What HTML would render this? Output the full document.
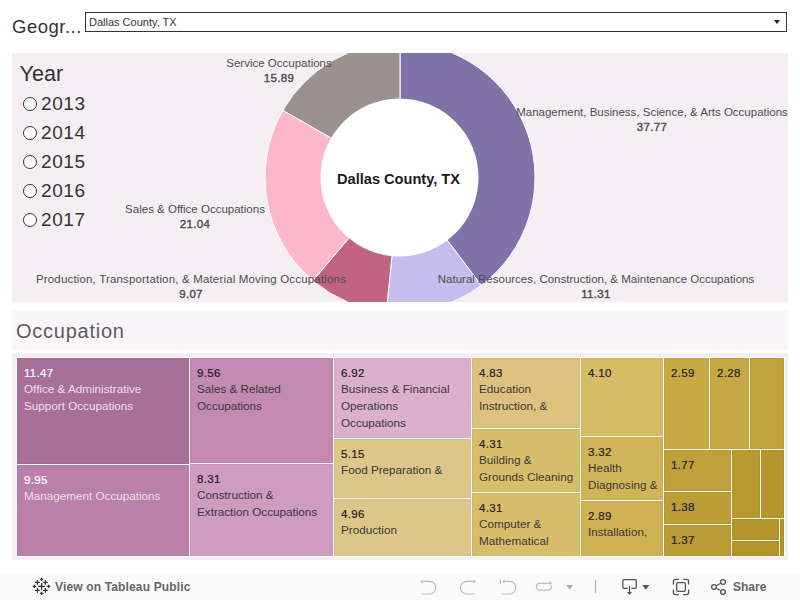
<!DOCTYPE html>
<html><head><meta charset="utf-8">
<style>
*{margin:0;padding:0;box-sizing:border-box}
html,body{width:800px;height:600px;overflow:hidden;background:#fff;font-family:"Liberation Sans",sans-serif;position:relative}
.a{position:absolute;white-space:nowrap}
#geo{left:12px;top:14.5px;font-size:18.5px;color:#333;line-height:24px;letter-spacing:0.5px}
#dd{left:85px;top:12px;width:702px;height:20px;border:1px solid #333;background:#fff}
#ddt{left:89px;top:16px;font-size:11px;line-height:13px;color:#333}
#ddarr{left:773.5px;top:20px;width:0;height:0;border-left:3.5px solid transparent;border-right:3.5px solid transparent;border-top:4.5px solid #222}
#top{left:12px;top:53px;width:776px;height:249px;background:#F5EFF4;overflow:hidden}
#year{left:19.5px;top:61.5px;font-size:21.6px;line-height:24px;color:#333}
.rb{position:absolute;left:23px;width:14px;height:14px;border:1px solid #333;border-radius:50%;background:#fff}
.yr{position:absolute;left:41px;font-size:19px;line-height:22px;color:#333;letter-spacing:0.6px}
.lbl{position:absolute;font-size:11.5px;line-height:15px;color:#4d4d4d;text-align:center;white-space:nowrap}
.lbl b{font-weight:normal;-webkit-text-stroke:0.4px #4d4d4d;color:#4d4d4d;letter-spacing:0.3px}
#occ{left:12px;top:310px;width:776px;height:40px;background:#FAF5F9}
#occt{left:16px;top:318px;font-size:20px;line-height:26px;color:#5c5c5c;letter-spacing:0.75px}
#tm{left:12px;top:353px;width:776px;height:207px;background:#F5EFF4}
#tmw{left:16px;top:357px;width:769px;height:200px;background:#fff}
.c{position:absolute;overflow:hidden;box-shadow:inset 0 0 0 1px rgba(0,0,0,0.04)}
.c .n{position:absolute;left:7px;top:8.8px;font-size:11.5px;font-weight:normal;-webkit-text-stroke:0.2px #222;line-height:13px;color:#222;letter-spacing:0.3px}
.c.w .n{-webkit-text-stroke:0.2px #fff}
.c .t{position:absolute;left:7px;top:22px;font-size:11.7px;line-height:17px;color:#3a3a3a;white-space:nowrap}
.c.w .n{color:#fff}
.c.w .t{color:#EDDFE8}
#tb{left:0;top:573px;width:800px;height:27px;background:#FAFAFA}
#vt{left:55px;top:580px;font-size:12px;font-weight:bold;line-height:14px;color:#666;letter-spacing:0.15px}
#sh{left:733px;top:580px;font-size:12px;font-weight:bold;line-height:14px;color:#666}
</style></head><body>
<div class="a" id="geo">Geogr...</div>
<div class="a" id="dd"></div>
<div class="a" id="ddt">Dallas County, TX</div>
<div class="a" id="ddarr"></div>

<div class="a" id="top">
<svg width="776" height="249" style="position:absolute;left:0;top:0">
<g transform="translate(-12,-53)" stroke="#fff" stroke-width="1">
<path d="M400 177.5 L400.00 42.50 A135 135 0 0 1 481.23 285.33 Z" fill="#7F72A8"/>
<path d="M400 177.5 L481.23 285.33 A135 135 0 0 1 386.29 311.80 Z" fill="#C5BDEB"/>
<path d="M400 177.5 L386.29 311.80 A135 135 0 0 1 312.91 280.65 Z" fill="#C26384"/>
<path d="M400 177.5 L312.91 280.65 A135 135 0 0 1 282.89 110.34 Z" fill="#FDB7CC"/>
<path d="M400 177.5 L282.89 110.34 A135 135 0 0 1 400.00 42.50 Z" fill="#9B918E"/>
<circle cx="399.5" cy="177.5" r="79" fill="#fff" stroke="none"/>
</g>
</svg>
</div>
<div class="a" id="year">Year</div>
<div class="rb" style="top:97px"></div><div class="yr" style="top:93px">2013</div>
<div class="rb" style="top:126px"></div><div class="yr" style="top:122px">2014</div>
<div class="rb" style="top:155px"></div><div class="yr" style="top:151px">2015</div>
<div class="rb" style="top:184px"></div><div class="yr" style="top:180px">2016</div>
<div class="rb" style="top:213px"></div><div class="yr" style="top:209px">2017</div>

<div class="lbl" style="left:179px;top:56px;width:200px">Service Occupations<br><b>15.89</b></div>
<div class="lbl" style="left:502px;top:105px;width:300px">Management, Business, Science, &amp; Arts Occupations<br><b>37.77</b></div>
<div class="lbl" style="left:95px;top:202px;width:200px">Sales &amp; Office Occupations<br><b>21.04</b></div>
<div class="lbl" style="left:16px;top:272px;width:350px;letter-spacing:0.17px">Production, Transportation, &amp; Material Moving Occupations<br><b>9.07</b></div>
<div class="lbl" style="left:421px;top:272px;width:350px">Natural Resources, Construction, &amp; Maintenance Occupations<br><b>11.31</b></div>
<div class="a" style="left:299px;top:171px;width:199px;text-align:center;font-size:14.6px;font-weight:bold;color:#1a1a1a;line-height:17px">Dallas County, TX</div>

<div class="a" id="occ"></div>
<div class="a" id="occt">Occupation</div>

<div class="a" id="tm"></div>
<div class="a" id="tmw"></div>
<!--cells-->
<div class="c w" style="left:17px;top:358px;width:172px;height:106px;background:#A86F98"><div class="n">11.47</div><div class="t">Office &amp; Administrative<br>Support Occupations</div></div>
<div class="c w" style="left:17px;top:465px;width:172px;height:91px;background:#BA80A9"><div class="n">9.95</div><div class="t">Management Occupations</div></div>
<div class="c" style="left:190px;top:358px;width:143px;height:105px;background:#C389B1"><div class="n">9.56</div><div class="t">Sales &amp; Related<br>Occupations</div></div>
<div class="c" style="left:190px;top:464px;width:143px;height:92px;background:#CF9BC0"><div class="n">8.31</div><div class="t">Construction &amp;<br>Extraction Occupations</div></div>
<div class="c" style="left:334px;top:358px;width:137px;height:80px;background:#DBB0CB"><div class="n">6.92</div><div class="t">Business &amp; Financial<br>Operations<br>Occupations</div></div>
<div class="c" style="left:334px;top:439px;width:137px;height:59px;background:#DEC68A"><div class="n">5.15</div><div class="t">Food Preparation &amp;</div></div>
<div class="c" style="left:334px;top:499px;width:137px;height:57px;background:#DEC68A"><div class="n">4.96</div><div class="t">Production</div></div>
<div class="c" style="left:472px;top:358px;width:108px;height:70px;background:#DCC27E"><div class="n">4.83</div><div class="t">Education<br>Instruction, &amp;</div></div>
<div class="c" style="left:472px;top:429px;width:108px;height:63px;background:#D7BE6A"><div class="n">4.31</div><div class="t">Building &amp;<br>Grounds Cleaning</div></div>
<div class="c" style="left:472px;top:493px;width:108px;height:63px;background:#D7BD6A"><div class="n">4.31</div><div class="t">Computer &amp;<br>Mathematical</div></div>
<div class="c" style="left:581px;top:358px;width:82px;height:78px;background:#D6BC66"><div class="n">4.10</div></div>
<div class="c" style="left:581px;top:437px;width:82px;height:63px;background:#D0B558"><div class="n">3.32</div><div class="t">Health<br>Diagnosing &amp;</div></div>
<div class="c" style="left:581px;top:501px;width:82px;height:55px;background:#CDB152"><div class="n">2.89</div><div class="t">Installation,</div></div>
<div class="c" style="left:664px;top:358px;width:45px;height:91px;background:#C8AA45"><div class="n">2.59</div></div>
<div class="c" style="left:710px;top:358px;width:39px;height:91px;background:#C5A841"><div class="n">2.28</div></div>
<div class="c" style="left:750px;top:358px;width:34px;height:91px;background:#C2A43C"></div>
<div class="c" style="left:664px;top:450px;width:67px;height:41px;background:#BFA03A"><div class="n">1.77</div></div>
<div class="c" style="left:664px;top:492px;width:67px;height:32px;background:#BC9D36"><div class="n">1.38</div></div>
<div class="c" style="left:664px;top:525px;width:67px;height:31px;background:#BA9B34"><div class="n">1.37</div></div>
<div class="c" style="left:732px;top:450px;width:28px;height:68px;background:#B8992F"></div>
<div class="c" style="left:761px;top:450px;width:23px;height:68px;background:#B6972D"></div>
<div class="c" style="left:732px;top:519px;width:47px;height:21px;background:#B4962B"></div>
<div class="c" style="left:732px;top:541px;width:47px;height:15px;background:#B39529"></div>
<div class="c" style="left:780px;top:519px;width:4px;height:37px;background:#B29428"></div>
<!--/cells-->

<div class="a" id="tb"></div>
<svg class="a" style="left:0;top:573px" width="800" height="27"><g transform="translate(0,-573)" fill="none" stroke-linecap="butt">
<g transform="translate(30,575)" stroke="#333">
<path d="M8.2 11.4H14.9M11.6 8.1V14.7" stroke-width="1.3"/>
<path d="M5 7.4H9.8M7.4 5V9.8M13 7.4H17.8M15.4 5V9.8M5 15.4H9.8M7.4 13V17.8M13 15.4H17.8M15.4 13V17.8" stroke-width="1.2"/>
<path d="M9.9 4.4H13.3M11.6 2.7V6.1M9.9 18.4H13.3M11.6 16.7V20.1M2.7 11.4H6.1M4.4 9.7V13.1M16.9 11.4H20.3M18.6 9.7V13.1" stroke-width="1.2"/>
</g>
<g stroke="#BDBDBD" stroke-width="1.2">
<path d="M422.5 581.4H429.5A6.3 6.3 0 0 1 429.5 594H421.2"/>
<path d="M473.7 581.4H466.7A6.3 6.3 0 0 0 466.7 594H475"/>
<path d="M504.5 581.4H509.5A6.3 6.3 0 0 1 509.5 594H501.2M500.4 579.2V583.6"/>
<path d="M551.5 583.3H539.8A3.45 3.45 0 0 0 539.8 590.2H548A3.45 3.45 0 0 0 551.2 585.5"/>
</g>
<g fill="#BDBDBD">
<path d="M420.2 581.4L422.6 579.2V583.6Z"/>
<path d="M476 581.4L473.6 579.2V583.6Z"/>
<path d="M502.2 581.4L504.6 579.2V583.6Z"/>
<path d="M551.9 583.3L549.5 581.2V585.4Z"/>
<path d="M566 585.1H573.2L569.6 589.6Z" fill="#AAAAAA"/>
</g>
<path d="M595.5 580.2V593" stroke="#AAAAAA" stroke-width="1"/>
<g stroke="#555" stroke-width="1.3">
<path d="M627.7 588.3H623.9A1 1 0 0 1 622.9 587.3V580.6A1 1 0 0 1 623.9 579.6H635.3A1 1 0 0 1 636.3 580.6V587.3A1 1 0 0 1 635.3 588.3H631.3M629.5 585.9V592.5"/>
<path d="M673.4 584.6V581.4A2 2 0 0 1 675.4 579.4H678.8M683.2 579.4H686.6A2 2 0 0 1 688.6 581.4V584.6M688.6 589.4V592.6A2 2 0 0 1 686.6 594.6H683.2M678.8 594.6H675.4A2 2 0 0 1 673.4 592.6V589.4"/>
<rect x="676.6" y="582.6" width="8.8" height="8.8" rx="1.6"/>
<circle cx="714" cy="587" r="2.4"/><circle cx="723" cy="582" r="2.4"/><circle cx="723" cy="592" r="2.4"/>
<path d="M716.1 585.8L720.9 583.2M716.1 588.2L720.9 590.8"/>
</g>
<g fill="#555">
<path d="M627 592L632 592L629.5 594.9Z"/>
<path d="M642.3 585H649.3L645.8 589.75Z"/>
</g>
</g></svg>
<div class="a" id="vt">View on Tableau Public</div>
<div class="a" id="sh">Share</div>
</body></html>
